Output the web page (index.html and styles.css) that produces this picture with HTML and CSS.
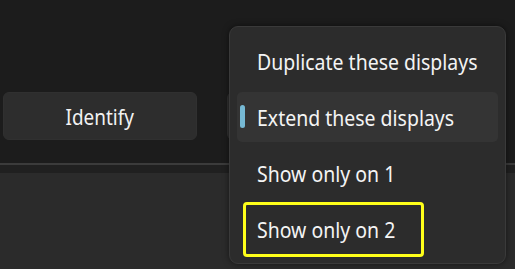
FILE: index.html
```html
<!DOCTYPE html>
<html>
<head>
<meta charset="utf-8">
<link rel="stylesheet" href="styles.css">
</head>
<body>
<div class="page">
  <div class="top">
    <div class="buttons">
      <div class="btn identify"><span class="label center">Identify</span></div>
      <div class="btn hidden-btn"></div>
    </div>
  </div>
  <div class="divider"></div>
  <div class="band"></div>
  <div class="lower"></div>
  <div class="menu">
    <div class="item"><span class="label">Duplicate these displays</span></div>
    <div class="item selected"><span class="indicator"></span><span class="label">Extend these displays</span></div>
    <div class="item"><span class="label">Show only on 1</span></div>
    <div class="item focused"><span class="focus-box"><span class="label">Show only on 2</span></span></div>
  </div>
</div>
</body>
</html>
```
FILE: styles.css
```css
html, body {
  margin: 0;
  padding: 0;
  background: #1c1c1c;
}
.page {
  position: relative;
  width: 515px;
  height: 269px;
  overflow: hidden;
  display: flex;
  flex-direction: column;
  font-family: "Noto Sans", "Open Sans", sans-serif;
  color: #ffffff;
}
.label {
  display: inline-block;
  transform: scaleX(0.885);
  transform-origin: left center;
  white-space: nowrap;
}
.label.center {
  transform: scaleX(0.86);
  transform-origin: center center;
}
.top {
  height: 163px;
  background: #1c1c1c;
  display: flex;
  flex-direction: column;
  padding-top: 92px;
  box-sizing: border-box;
}
.buttons {
  display: flex;
  gap: 30px;
  padding-left: 3px;
}
.btn {
  height: 48px;
  border-radius: 6px;
  background: #2d2d2d;
  border: 1px solid #303030;
  box-sizing: border-box;
}
.identify {
  width: 194px;
  display: flex;
  align-items: center;
  justify-content: center;
  font-size: 22px;
  color: #f2f2f2;
}
.hidden-btn {
  width: 120px;
}
.divider {
  height: 2px;
  background: #3b3b3b;
}
.band {
  height: 8px;
  background: #202020;
}
.lower {
  flex: 1;
  background: #2b2b2b;
}
.menu {
  position: absolute;
  left: 229px;
  top: 26px;
  width: 277px;
  height: 238px;
  box-sizing: border-box;
  background: #2c2c2c;
  border: 1px solid #3a3a3a;
  border-radius: 9px;
  box-shadow: 0 0 6px rgba(0,0,0,0.5);
  padding: 9px 7px;
  display: flex;
  flex-direction: column;
  gap: 6px;
}
.item {
  position: relative;
  height: 50px;
  border-radius: 5px;
  display: flex;
  align-items: center;
  padding-left: 20px;
  font-size: 22px;
  color: #f4f4f4;
}
.selected {
  background: #343434;
}
.indicator {
  position: absolute;
  left: 3px;
  top: 13px;
  width: 5px;
  height: 23px;
  border-radius: 3px;
  background: #76b9d4;
}
.focused {
  padding-left: 6px;
}
.focus-box {
  display: flex;
  align-items: center;
  width: 181px;
  height: 55px;
  box-sizing: border-box;
  padding: 0 0 0 11px;
  border: 3.5px solid #ffff1a;
  border-radius: 4px;
  overflow: hidden;
}
```
